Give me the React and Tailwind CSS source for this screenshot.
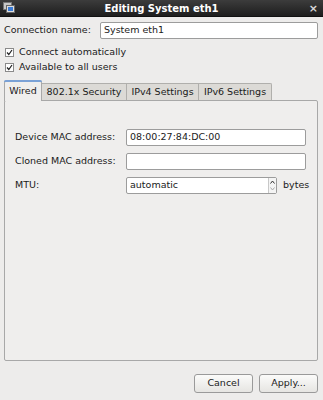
import React from "react";

function Check({ label }) {
  return (
    <div className="flex items-center h-[14px]">
      <div className="ml-[5px] w-[9px] h-[9px] border border-[#8a8a8a] bg-white flex items-center justify-center">
        <svg width="7" height="7" viewBox="0 0 7 7">
          <path d="M1 3.5 L2.8 5.5 L6 1" fill="none" stroke="#222" strokeWidth="1.2" />
        </svg>
      </div>
      <span className="ml-[5px] whitespace-nowrap">{label}</span>
    </div>
  );
}

function Field({ label, value, children }) {
  return (
    <div className="flex items-center h-[17px]">
      <div className="w-[121px] shrink-0 pl-[10px] whitespace-nowrap">{label}</div>
      {children ? (
        children
      ) : (
        <div className="w-[180px] h-[17px] border border-[#9c9c9c] bg-white rounded-[2px] flex items-center pl-[3px]">
          {value}
        </div>
      )}
    </div>
  );
}

export default function App() {
  return (
    <div
      className="w-[323px] h-[400px] bg-[#edeceb] flex flex-col text-[9.5px] text-[#1a1a1a] overflow-hidden"
      style={{ fontFamily: '"DejaVu Sans", sans-serif' }}
    >
      <div className="relative h-[17px] bg-gradient-to-b from-[#3c3c3c] to-[#1e1e1e] flex items-center justify-center border-b border-[#111]">
        <svg className="absolute left-[3px] top-[2px]" width="12" height="12" viewBox="0 0 12 12">
          <rect x="0.5" y="0.5" width="8" height="7" fill="#c8c8c8" stroke="#777" />
          <rect x="3.5" y="3.5" width="8" height="7" fill="#ddd" stroke="#666" />
          <rect x="5" y="5" width="5" height="4" fill="#3a7bd5" />
        </svg>
        <span className="text-white font-bold text-[10px]">Editing System eth1</span>
        <span className="absolute right-[5px] top-[1px] text-[#d8d8d8] font-bold text-[11px]">×</span>
      </div>

      <div className="flex items-center mt-[5px] h-[17px]">
        <span className="ml-[4px] w-[96px] whitespace-nowrap">Connection name:</span>
        <div className="w-[218px] h-[17px] border border-[#9c9c9c] bg-white rounded-[2px] flex items-center pl-[3px]">
          System eth1
        </div>
      </div>

      <div className="mt-[6px] flex flex-col gap-[1px]">
        <Check label="Connect automatically" />
        <Check label="Available to all users" />
      </div>

      <div className="mt-[6px] ml-[4px] flex items-end h-[20px] relative z-10">
        <div className="h-[21px] -mb-[1px] w-[38px] bg-[#efeeed] border border-[#a8a8a8] border-b-0 rounded-t-[3px] flex items-center justify-center relative">
          <div className="absolute -top-[1px] -left-[1px] -right-[1px] h-[2px] bg-[#7aa1d6] rounded-t-[3px]" />
          Wired
        </div>
        <div className="h-[17px] w-[85px] bg-[#dcdad6] border border-[#b0afac] border-l-0 border-b-0 flex items-center justify-center whitespace-nowrap">
          802.1x Security
        </div>
        <div className="h-[17px] w-[72px] bg-[#dcdad6] border border-[#b0afac] border-l-0 border-b-0 flex items-center justify-center whitespace-nowrap">
          IPv4 Settings
        </div>
        <div className="h-[17px] w-[73px] bg-[#dcdad6] border border-[#b0afac] border-l-0 border-b-0 rounded-tr-[2px] flex items-center justify-center whitespace-nowrap">
          IPv6 Settings
        </div>
      </div>

      <div className="ml-[4px] w-[314px] h-[261px] bg-[#efeeed] border border-[#a8a8a8] rounded-[2px] flex flex-col gap-[7px] pt-[28px]">
        <Field label="Device MAC address:" value="08:00:27:84:DC:00" />
        <Field label="Cloned MAC address:" value="" />
        <Field label="MTU:">
          <div className="w-[151px] h-[17px] border border-[#9c9c9c] bg-white rounded-[2px] flex items-center pl-[3px] relative">
            automatic
            <div className="absolute right-[0px] top-[0px] bottom-[0px] w-[8px] bg-[#f4f4f4] border-l border-[#c8c8c8] flex flex-col items-center justify-around">
              <svg width="5" height="4" viewBox="0 0 5 4"><path d="M0.5 3.5 L2.5 1 L4.5 3.5" fill="none" stroke="#333" strokeWidth="1" /></svg>
              <svg width="5" height="4" viewBox="0 0 5 4"><path d="M0.5 0.5 L2.5 3 L4.5 0.5" fill="none" stroke="#aaa" strokeWidth="1" /></svg>
            </div>
          </div>
          <span className="ml-[6px]">bytes</span>
        </Field>
      </div>

      <div className="mt-[13px] flex justify-end gap-[6px] pr-[5px]">
        <div className="w-[59px] h-[19px] border border-[#9a9a9a] rounded-[3px] bg-gradient-to-b from-[#fbfbfa] to-[#e6e5e2] flex items-center justify-center">
          Cancel
        </div>
        <div className="w-[59px] h-[19px] border border-[#9a9a9a] rounded-[3px] bg-gradient-to-b from-[#fbfbfa] to-[#e6e5e2] flex items-center justify-center">
          Apply...
        </div>
      </div>
    </div>
  );
}
